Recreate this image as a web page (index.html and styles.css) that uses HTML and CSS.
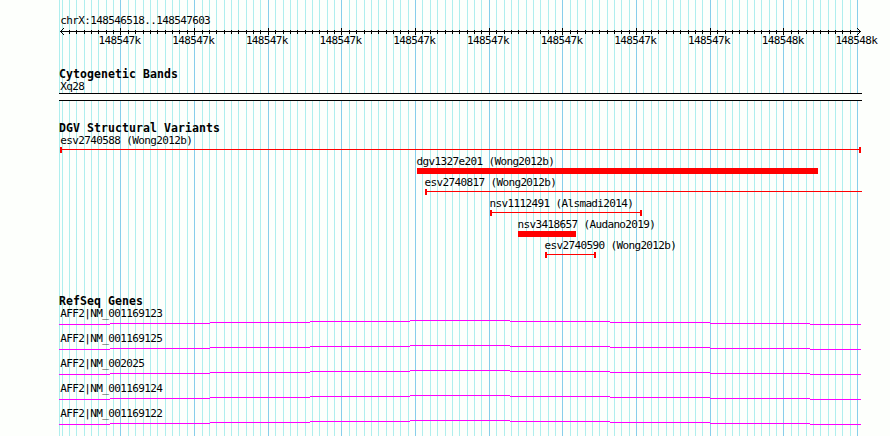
FILE: index.html
```
<!DOCTYPE html>
<html lang="en">
<head>
<meta charset="utf-8">
<title>chrX:148546518..148547603</title>
<link rel="stylesheet" href="styles.css">
</head>
<body>
<main class="browser">
  <svg class="grid" width="890" height="436" shape-rendering="crispEdges" aria-hidden="true">
    <path class="minor" id="minor"/>
    <path class="major" id="major"/>
  </svg>
  <header class="ruler">
    <div class="region">chrX:148546518..148547603</div>
    <svg class="axis" width="890" height="9" shape-rendering="crispEdges">
      <path id="ticks" d="M60 4.5H861"/>
      <path d="M61 3.5h1M62 2.5h1M63 1.5h1M61 5.5h1M62 6.5h1M63 7.5h1M859 3.5h1M858 2.5h1M857 1.5h1M859 5.5h1M858 6.5h1M857 7.5h1"/>
    </svg>
    <div class="scale">
      <span>148547k</span><span>148547k</span><span>148547k</span><span>148547k</span><span>148547k</span><span>148547k</span><span>148547k</span><span>148547k</span><span>148547k</span><span>148548k</span><span>148548k</span>
    </div>
  </header>
  <section class="bands">
    <h2>Cytogenetic Bands</h2>
    <div class="label">Xq28</div>
    <div class="band"></div>
  </section>
  <section class="variants">
    <h2>DGV Structural Variants</h2>
    <div class="variant" style="--start:60px;--length:801px"><div class="label">esv2740588 (Wong2012b)</div><div class="span left right"></div></div>
    <div class="variant" style="--start:417px;--length:401px"><div class="label">dgv1327e201 (Wong2012b)</div><div class="span solid"></div></div>
    <div class="variant" style="--start:425px;--length:437px"><div class="label">esv2740817 (Wong2012b)</div><div class="span left"></div></div>
    <div class="variant" style="--start:490px;--length:152px"><div class="label">nsv1112491 (Alsmadi2014)</div><div class="span left right"></div></div>
    <div class="variant" style="--start:518px;--length:58px"><div class="label">nsv3418657 (Audano2019)</div><div class="span solid"></div></div>
    <div class="variant" style="--start:545px;--length:51px"><div class="label">esv2740590 (Wong2012b)</div><div class="span left right"></div></div>
  </section>
  <section class="genes">
    <h2>RefSeq Genes</h2>
    <div class="gene"><div class="label">AFF2|NM_001169123</div><svg class="intron" width="890" height="4"><use href="#hat"/></svg></div>
    <div class="gene"><div class="label">AFF2|NM_001169125</div><svg class="intron" width="890" height="4"><use href="#hat"/></svg></div>
    <div class="gene"><div class="label">AFF2|NM_002025</div><svg class="intron" width="890" height="4"><use href="#hat"/></svg></div>
    <div class="gene"><div class="label">AFF2|NM_001169124</div><svg class="intron" width="890" height="4"><use href="#hat"/></svg></div>
    <div class="gene"><div class="label">AFF2|NM_001169122</div><svg class="intron" width="890" height="4"><use href="#hat"/></svg></div>
  </section>
  <svg class="defs" width="0" height="0"><defs><path id="hat" d="M59 3.5H110M110 2.5H210M210 1.5H310M310 .5H410M410 -.5H510M510 .5H610M610 1.5H710M710 2.5H810M810 3.5H861"/></defs></svg>
</main>
<script src="grid.js"></script>
</body>
</html>
```
FILE: styles.css
```
body {
  margin: 0;
  background: #fdfffc;
  color: #000;
  font: 11px/13px "DejaVu Sans Mono", monospace;
  letter-spacing: -0.63px;
}
.browser {
  position: relative;
  display: flex;
  flex-direction: column;
  width: 890px;
  height: 436px;
  overflow: hidden;
}
.grid {
  position: absolute;
  inset: 0;
  z-index: -1;
}
.grid path { fill: none; stroke-width: 1; }
.minor { stroke: #afeeee; }
.major { stroke: #87ceeb; }
.ruler { height: 68px; padding-top: 14px; box-sizing: border-box; }
.region { height: 13px; padding-left: 60.3px; }
.axis { display: block; }
.axis path { fill: none; stroke: #000; }
.scale {
  display: flex;
  justify-content: space-between;
  width: 779px;
  margin: -2px 0 0 98.5px;
}
.scale span { width: 42px; }
h2 {
  margin: 0 0 0 59px;
  height: 12px;
  font-size: 11.5px;
  line-height: 13px;
  letter-spacing: 0.08px;
}
.label { height: 13px; white-space: pre; padding-left: 60.3px; }
.bands { height: 54px; }
.band {
  width: 803px;
  height: 8px;
  box-sizing: border-box;
  margin-left: 59px;
  border: solid #000;
  border-width: 1px 0;
  background: #fdfffc;
}
.variants { height: 173px; }
.variant { height: 21px; }
.variant .label { padding-left: calc(var(--start) - 0.5px); }
.variant:first-of-type .label { padding-left: 60.3px; }
.span {
  display: flex;
  justify-content: space-between;
  width: var(--length);
  height: 6px;
  margin-left: var(--start);
  background: linear-gradient(#f00, #f00) 0 2px / 100% 1px no-repeat;
}
.span.solid { background: #f00; }
.span.left::before, .span.right::after {
  content: "";
  width: 2px;
  height: 6px;
  background: #f00;
}
.span.right:not(.left) { justify-content: flex-end; }
.gene { height: 25px; }
.intron { display: block; margin-top: 1px; overflow: visible; shape-rendering: crispEdges; }
.gene .label { margin-bottom: 0; }
#hat { stroke: #f0f; fill: none; }
.defs { position: absolute; }
```
FILE: grid.js
```
const major = [120, 194, 268, 341, 415, 489, 562, 636, 710, 783, 857];
const minor = [59];
for (let i = -8; i < 100; i++) {
  if (i % 10) minor.push(Math.floor(120.97 + i * 7.3665));
}
const lines = xs => xs.map(x => `M${x + 0.5} 0V436`).join("");
document.getElementById("minor").setAttribute("d", lines(minor));
document.getElementById("major").setAttribute("d", lines(major));

// The arrowheads take the place of the first and last ticks.
const ticks = document.getElementById("ticks");
ticks.setAttribute("d", ticks.getAttribute("d")
  + minor.slice(2).map(x => `M${x + 0.5} 3V7`).join("")
  + major.slice(0, -1).map(x => `M${x + 0.5} 1V8`).join(""));
```
